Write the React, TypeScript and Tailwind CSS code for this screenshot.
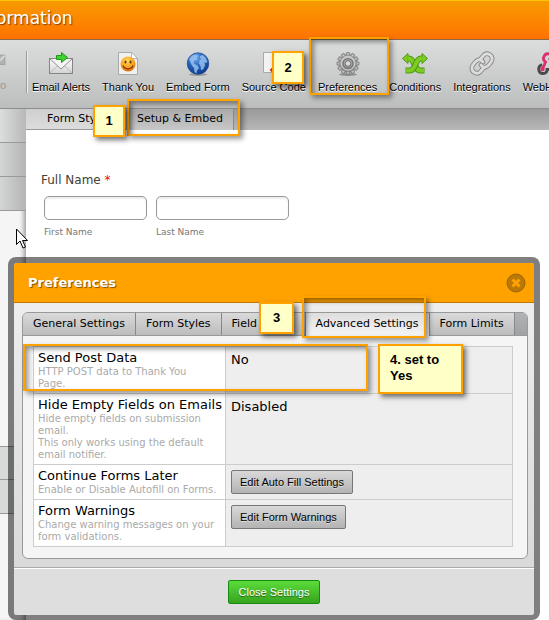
import React from "react";

const toolbarItems = [
  { label: "Email Alerts", icon: <EmailIcon /> },
  { label: "Thank You", icon: <ThankYouIcon /> },
  { label: "Embed Form", icon: <GlobeIcon /> },
  { label: "Source Code", icon: <SourceIcon /> },
  { label: "Preferences", icon: <GearIcon /> },
  { label: "Conditions", icon: <ShuffleIcon /> },
  { label: "Integrations", icon: <ChainIcon /> },
  { label: "WebHooks", icon: <WebhookIcon /> },
];

const settingsTabs = ["General Settings", "Form Styles", "Field Styles", "Advanced Settings", "Form Limits"];

function EmailIcon() {
  return (
    <svg width="26" height="26" viewBox="0 0 26 26">
      <defs>
        <linearGradient id="mail" x1="0" y1="0" x2="0" y2="1">
          <stop offset="0" stopColor="#ffffff" />
          <stop offset="1" stopColor="#d2d2d2" />
        </linearGradient>
      </defs>
      <rect x="1.5" y="7.5" width="23" height="15" fill="url(#mail)" stroke="#858585" />
      <path d="M2 22l8.5-8M24 22l-8.5-8" stroke="#bdbdbd" fill="none" />
      <path d="M2 8l11 10L24 8" stroke="#8f8f8f" fill="#f4f4f4" />
      <path d="M8.5 4.500h5v-3l6 5-6 5v-3h-5z" fill="#3fd32f" stroke="#1e9a18" strokeLinejoin="round" />
    </svg>
  );
}

function ThankYouIcon() {
  return (
    <svg width="26" height="26" viewBox="0 0 26 26">
      <defs>
        <radialGradient id="smile" cx="0.45" cy="0.3" r="0.75">
          <stop offset="0" stopColor="#ffd95a" />
          <stop offset="0.6" stopColor="#f9a11f" />
          <stop offset="1" stopColor="#d9650a" />
        </radialGradient>
      </defs>
      <path d="M3.5 1.500h13l6 6v16h-19z" fill="#f0f0f0" stroke="#a9a9a9" />
      <path d="M16.5 1.500v6h6z" fill="#fff" stroke="#b5b5b5" />
      <circle cx="13" cy="13" r="7.5" fill="url(#smile)" />
      <ellipse cx="10.5" cy="11" rx="1" ry="1.6" fill="#6b2d00" />
      <ellipse cx="15.5" cy="11" rx="1" ry="1.6" fill="#6b2d00" />
      <path d="M8 14.500c2 4.500 8 4.500 10 0" stroke="#8a3500" strokeWidth="1.3" fill="none" />
    </svg>
  );
}

function GlobeIcon() {
  return (
    <svg width="26" height="26" viewBox="0 0 26 26">
      <defs>
        <radialGradient id="sea" cx="0.4" cy="0.25" r="0.8">
          <stop offset="0" stopColor="#6fa4e6" />
          <stop offset="0.5" stopColor="#2463bc" />
          <stop offset="1" stopColor="#0c3684" />
        </radialGradient>
      </defs>
      <ellipse cx="13" cy="23.5" rx="9" ry="1.5" fill="#000" opacity="0.25" />
      <circle cx="13" cy="12.5" r="10.8" fill="url(#sea)" stroke="#1b4690" strokeWidth="0.6" />
      <path d="M4 8l3-3.500 5-1 1.500 1.500-2 1.500 1 2-3 1-1 2.500 2 1.500 2 1 1.500 2.500-2 2.500-.5 3-2-1.500-.5-4-2-2.500-1.500-3z" fill="#9cc4f0" opacity="0.8" />
      <path d="M15 5l3-1 3 3 1.500 4-1.500 1-1.500-1 .5 3.500-2 4-2 .5-.5-4-1.500-2.500.5-3 2-1.500-1.500-1z" fill="#9cc4f0" opacity="0.8" />
    </svg>
  );
}

function SourceIcon() {
  return (
    <svg width="26" height="26" viewBox="0 0 26 26">
      <path d="M2.5 1.500h14l6 6v14h-20z" fill="#f3f3f3" stroke="#a9a9a9" />
      <path d="M14 15l-4 4 4 4" stroke="#d9352b" strokeWidth="2" fill="none" />
    </svg>
  );
}

function GearIcon() {
  const teeth = [0, 30, 60, 90, 120, 150, 180, 210, 240, 270, 300, 330];
  return (
    <svg width="26" height="26" viewBox="0 0 26 26">
      <defs>
        <linearGradient id="steel" x1="0" y1="0" x2="0" y2="1">
          <stop offset="0" stopColor="#c6c6c6" />
          <stop offset="1" stopColor="#8a8a8a" />
        </linearGradient>
      </defs>
      <ellipse cx="13" cy="23.5" rx="9" ry="1.5" fill="#000" opacity="0.3" />
      {teeth.map((a) => (
        <rect key={a} x="11.3" y="1.6" width="3.4" height="4.4" rx="0.8" fill="#bdbdbd" stroke="#6c6c6c" strokeWidth="0.8" transform={`rotate(${a} 13 12.5)`} />
      ))}
      <circle cx="13" cy="12.5" r="8.3" fill="url(#steel)" stroke="#7c7c7c" strokeWidth="0.6" />
      <circle cx="13" cy="12.5" r="6.6" fill="none" stroke="#d2d2d2" strokeWidth="1" />
      <circle cx="13" cy="12.5" r="4.8" fill="none" stroke="#787878" strokeWidth="1.4" />
      <circle cx="13" cy="12.5" r="2.8" fill="#dcdcdc" stroke="#6f6f6f" />
    </svg>
  );
}

function ShuffleIcon() {
  return (
    <svg width="26" height="26" viewBox="0 0 26 26">
      <g fill="none" strokeLinejoin="round">
        <path d="M5 7.500h2c6 0 5 12 11 12h4.500" stroke="#4b9a12" strokeWidth="6" />
        <path d="M5 7.500h2c6 0 5 12 11 12h4" stroke="#7ecb25" strokeWidth="4" />
        <path d="M21 7.500h-2c-6 0-5 12-11 12H3.500" stroke="#4b9a12" strokeWidth="6" />
        <path d="M21 7.500h-2c-6 0-5 12-11 12H4" stroke="#7ecb25" strokeWidth="4" />
      </g>
      <path d="M6 2.500v10l-5.500-5z" fill="#7ecb25" stroke="#4b9a12" />
      <path d="M20 2.500v10l5.500-5z" fill="#7ecb25" stroke="#4b9a12" />
      <path d="M5.5 5.600h2v3.800h-2zM18.5 5.600h2v3.800h-2z" fill="#7ecb25" />
    </svg>
  );
}

function ChainIcon() {
  return (
    <svg width="26" height="26" viewBox="0 0 26 26">
      <g fill="none" strokeLinecap="round" strokeLinejoin="round">
        {[
          { color: "#858585", width: 4.6 },
          { color: "#dcdcdc", width: 2.8 },
        ].map((s) => (
          <g key={s.color} stroke={s.color} strokeWidth={s.width}>
            <path d="M11 8.500l4-4.500c3-3 9 0 8 5-.5 2-3.500 6-6 7-2 .6-4-.2-5-2" />
            <path d="M15 16.500l-4 4.500c-3 3-9 0-8-5 .5-2 3.500-6 6-7 2-.6 4 .2 5 2" />
          </g>
        ))}
      </g>
    </svg>
  );
}

function WebhookIcon() {
  return (
    <svg width="26" height="26" viewBox="0 0 26 26" fill="none" strokeWidth="2.8">
      <path d="M13 7l4 7c4-2 8 1 7 5" stroke="#8a8a8a" />
      <path d="M6 13.500c-5 2-4 9 1 9 3 0 4-2 4-4h9" stroke="#4a4a4a" />
      <path d="M16.5 8a4.500 4.500 0 1 0-7 3l-3 7" stroke="#dc2f6c" />
      <circle cx="6.5" cy="18" r="2.2" fill="#dc2f6c" stroke="none" />
    </svg>
  );
}

function CursorIcon() {
  return (
    <svg width="13" height="21" viewBox="0 0 13 21" className="absolute left-4 top-[228px]">
      <path d="M.5 1v15.500l3.500-3.500 3 7 2.500-1-3-6.500h5z" fill="#fff" stroke="#000" />
    </svg>
  );
}

function Callout({ className, children }: { className: string; children: React.ReactNode }) {
  return (
    <div className={`absolute border-2 border-[#ffa200] bg-[#ffffc8] font-['Liberation_Sans',sans-serif] text-[13px] font-bold leading-4 text-black shadow-[3px_3px_5px_rgba(0,0,0,0.55)] ${className}`}>
      {children}
    </div>
  );
}

function Highlight({ className }: { className: string }) {
  return (
    <div className={`pointer-events-none absolute border-2 border-[#ffa200] shadow-[3px_3px_5px_rgba(0,0,0,0.4),inset_3px_3px_5px_rgba(0,0,0,0.4)] ${className}`} />
  );
}

function SettingRow({ title, lines, children }: { title: string; lines: string[]; children: React.ReactNode }) {
  return (
    <tr>
      <th scope="row" className="w-[192px] border border-[#ccc] bg-white py-[3px] pr-0 pl-1 text-left align-top font-normal">
        <div className="text-[13px] leading-4 whitespace-nowrap text-black">{title}</div>
        {lines.map((line) => (
          <div key={line} className="text-[10px] leading-3 whitespace-nowrap text-[#aaa]">{line}</div>
        ))}
      </th>
      <td className="border border-[#ccc] bg-[#eee] px-[5px] pt-[5px] align-top text-[13px] leading-4 text-black">{children}</td>
    </tr>
  );
}

function GrayButton({ children }: { children: React.ReactNode }) {
  return (
    <button className="block h-6 rounded-xs border border-[#777] bg-linear-to-b from-[#d8d8d8] to-[#b4b4b4] px-2 font-['Liberation_Sans',sans-serif] text-[11px] leading-4 text-black [text-shadow:0_1px_0_#ddd]">
      {children}
    </button>
  );
}

function PreferencesDialog() {
  return (
    <section aria-label="Preferences" className="absolute top-[257px] right-[9px] left-2 rounded-lg bg-black/50 p-1.5 pb-[5px]">
      <div className="overflow-hidden rounded-[3px] bg-linear-to-b from-[#f0f0f0] to-[#d6d6d6]">
        <div className="flex h-10 items-center justify-between border-b border-[#c47a00] bg-[#ffa200] pr-2 pl-[14px]">
          <h2 className="text-[13px] font-bold text-white [text-shadow:1px_1px_1px_rgba(0,0,0,0.5)]">Preferences</h2>
          <button aria-label="Close" className="rounded-full">
            <svg width="20" height="20" viewBox="0 0 20 20">
              <circle cx="10" cy="10" r="9" fill="#bb7803" stroke="#99660a" />
              <path d="M6.500 6.500l7 7M13.500 6.500l-7 7" stroke="#ffa200" strokeWidth="3" />
            </svg>
          </button>
        </div>

        <div className="pt-[9px] pr-1.5 pb-2 pl-2">
          <div className="overflow-hidden rounded-md border border-[#999] bg-[#f5f5f5]">
            <div className="flex h-[23px] border-b border-[#999] bg-linear-to-b from-[#b0b2b4] to-[#a0a2a4]">
              {settingsTabs.map((tab) => (
                <button
                  key={tab}
                  className={
                    tab === "Advanced Settings"
                      ? "-mb-px border-r border-[#888] bg-linear-to-b from-[#dedede] to-[#f5f5f5] px-2.5 text-[11px] whitespace-nowrap"
                      : tab === "Field Styles"
                        ? "w-[84px] overflow-hidden border-r border-[#888] bg-linear-to-b from-[#dadada] to-[#bcbcbc] px-2.5 text-left text-[11px] whitespace-nowrap"
                        : "border-r border-[#888] bg-linear-to-b from-[#dadada] to-[#bcbcbc] px-2.5 text-[11px] whitespace-nowrap"
                  }
                >
                  {tab}
                </button>
              ))}
            </div>
            <div className="pt-2.5 pr-[14px] pb-[11px] pl-2.5">
              <table className="w-full table-fixed border-collapse">
                <tbody>
                  <SettingRow title="Send Post Data" lines={["HTTP POST data to Thank You", "Page."]}>No</SettingRow>
                  <SettingRow
                    title="Hide Empty Fields on Emails"
                    lines={["Hide empty fields on submission", "email.", "This only works using the default", "email notifier."]}
                  >
                    Disabled
                  </SettingRow>
                  <SettingRow title="Continue Forms Later" lines={["Enable or Disable Autofill on Forms."]}>
                    <GrayButton>Edit Auto Fill Settings</GrayButton>
                  </SettingRow>
                  <SettingRow title="Form Warnings" lines={["Change warning messages on your", "form validations."]}>
                    <GrayButton>Edit Form Warnings</GrayButton>
                  </SettingRow>
                </tbody>
              </table>
            </div>
          </div>
        </div>

        <div className="flex justify-center border-t border-[#aaa] bg-[#dedede] pt-3 pb-[11px] shadow-[inset_0_1px_0_#fff]">
          <button className="h-6 rounded-xs border border-[#168a10] bg-linear-to-b from-[#5bdc3b] to-[#37a41e] px-2.5 font-['Liberation_Sans',sans-serif] text-[11px] text-white [text-shadow:0_1px_1px_rgba(0,0,0,0.5)]">
            Close Settings
          </button>
        </div>
      </div>
    </section>
  );
}

export default function App() {
  return (
    <div className="relative flex min-h-screen flex-col overflow-hidden bg-white font-['DejaVu_Sans',sans-serif] text-black">
      <header className="flex h-10 items-center border-t border-b border-t-[#ffc20a] border-b-[#8a6a4a] bg-linear-to-b from-[#f79a00] to-[#ff7200]">
        <h1 className="-ml-1 pb-1 text-[17px] leading-6 text-white [text-shadow:1px_1px_1px_rgba(0,0,0,0.5)]">ormation</h1>
      </header>

      <nav className="flex h-[69px] items-start border-b border-[#8c8c8c] bg-linear-to-b from-[#dcdddd] to-[#bcbdbd] pt-[11px] font-['Liberation_Sans',sans-serif] text-[11px]">
        <div className="flex h-[42px] w-[27px] shrink-0 flex-col border-r border-[#999] text-[#999] shadow-[1px_0_0_#eee]">
          <svg width="6" height="26" viewBox="0 0 6 26">
            <rect x="-20" y="4.5" width="25" height="10" fill="#b4b4b4" stroke="#9d9d9d" />
            <path d="M0 10l5-5" stroke="#d8d8d8" strokeWidth="2" />
          </svg>
          <span className="pt-0.5 leading-4">o</span>
        </div>
        <div className="flex gap-3 pl-[5px]">
          {toolbarItems.map((item) => (
            <a key={item.label} href="#" className="flex flex-col items-center whitespace-nowrap">
              {item.icon}
              <span className="pt-0.5 leading-4 [text-shadow:0_1px_0_#fff]">{item.label}</span>
            </a>
          ))}
        </div>
      </nav>

      <div className="flex flex-1">
        <aside className="flex w-[26px] shrink-0 flex-col bg-[#f5f5f5] shadow-[inset_-5px_0_5px_-3px_rgba(0,0,0,0.4)]">
          <div className="h-[34px] border-b border-[#999] bg-linear-to-r from-[#dcdddd] to-[#b8b8b8]" />
          <div className="h-[34px] border-b border-[#999] bg-linear-to-r from-[#d4d5d5] to-[#b4b4b4]" />
          <div className="h-[34px] border-b border-[#999] bg-linear-to-r from-[#d4d5d5] to-[#b4b4b4]" />
          <div className="h-[235px]" />
          <div className="h-[34px] border-t border-b border-[#999] bg-[#d8dada]" />
          <div className="h-[34px] border-b border-[#999] bg-[#d8dada]" />
        </aside>

        <main className="flex-1">
          <div className="flex h-[21px] bg-linear-to-b from-[#999] to-[#b8b8b8] text-[11px]">
            <button className="w-[101px] overflow-hidden border-r border-b border-[#999] bg-linear-to-b from-[#cfcfcf] to-[#dcdcdc] pl-[21px] text-left whitespace-nowrap">Form Styles</button>
            <button className="border-r border-[#888] bg-linear-to-b from-[#aaa] to-[#c8c8c8] px-2.5 whitespace-nowrap">Setup &amp; Embed</button>
          </div>
          <form className="pt-[42px] pl-[15px]">
            <div className="text-xs leading-4 text-[#444035]">
              Full Name <span className="text-[#f00]">*</span>
            </div>
            <div className="flex gap-[9px] pt-2 pl-[3px] text-[9px] text-[#777]">
              <label className="flex w-[103px] flex-col">
                <input type="text" className="order-1 h-6 w-full rounded-[5px] border border-[#999] bg-white shadow-[inset_0_2px_2px_#eee]" />
                <span className="order-2 pt-1.5 leading-3">First Name</span>
              </label>
              <label className="flex w-[133px] flex-col">
                <input type="text" className="order-1 h-6 w-full rounded-[5px] border border-[#999] bg-white shadow-[inset_0_2px_2px_#eee]" />
                <span className="order-2 pt-1.5 leading-3">Last Name</span>
              </label>
            </div>
          </form>
        </main>
      </div>

      <CursorIcon />
      <PreferencesDialog />

      <Highlight className="top-[99px] left-[127px] h-[37px] w-[113px]" />
      <Callout className="top-[105px] left-[93px] flex h-8 w-8 items-center justify-center">1</Callout>
      <Highlight className="top-[37px] left-[309px] h-[58px] w-[80px]" />
      <Callout className="top-[51px] left-[272px] flex h-[33px] w-8 items-center justify-center">2</Callout>
      <Highlight className="top-[296px] left-[302px] h-[42px] w-[124px]" />
      <Callout className="top-[302px] left-[259px] flex h-8 w-[35px] items-center justify-center">3</Callout>
      <Highlight className="top-[344px] left-[23px] h-[47px] w-[345px]" />
      <Callout className="top-[344px] left-[378px] h-[50px] w-[85px] px-2.5 py-1.5">4. set to Yes</Callout>
    </div>
  );
}
